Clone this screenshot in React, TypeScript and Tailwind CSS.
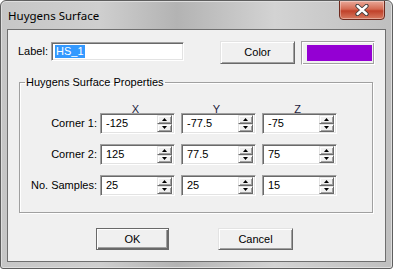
const font = { fontFamily: '"Liberation Sans", Arial, sans-serif' }

const Arrow = ({ down }: { down?: boolean }) => (
  <svg width="5" height="3" viewBox="0 0 5 3" className="block">
    <path d={down ? 'M0 0H5L2.5 3Z' : 'M0 3H5L2.5 0Z'} fill="#000" />
  </svg>
)

const SpinButton = ({ down }: { down?: boolean }) => (
  <div className="flex-1 flex items-center justify-center bg-[#f0f0f0] border border-t-[#e3e3e3] border-l-[#e3e3e3] border-b-[#696969] border-r-[#696969] shadow-[inset_1px_1px_0_#fff,inset_-1px_-1px_0_#a0a0a0]">
    <Arrow down={down} />
  </div>
)

const SpinBox = ({ value }: { value: string }) => (
  <div className="w-[75px] h-[21px] flex bg-white border border-t-[#a0a0a0] border-l-[#a0a0a0] border-b-white border-r-white shadow-[inset_1px_1px_0_#696969,inset_-1px_-1px_0_#e3e3e3]">
    <div className="flex-1 flex items-center pl-[5px] text-[11px] text-black">{value}</div>
    <div className="w-[15px] flex flex-col my-[1px] mr-[2px]">
      <SpinButton />
      <SpinButton down />
    </div>
  </div>
)

const Button = ({ label, width, isDefault }: { label: string; width: string; isDefault?: boolean }) => (
  <div
    className={`${width} h-[22px] flex items-center justify-center text-[11px] text-black bg-[#f0f0f0] border ${
      isDefault
        ? 'border-[#696969] shadow-[inset_1px_1px_0_#fff,inset_-1px_-1px_0_#696969,inset_-2px_-2px_0_#a0a0a0]'
        : 'border-t-[#e3e3e3] border-l-[#e3e3e3] border-b-[#696969] border-r-[#696969] shadow-[inset_1px_1px_0_#fff,inset_-1px_-1px_0_#a0a0a0]'
    }`}
  >
    {label}
  </div>
)

const rows = [
  { label: 'Corner 1:', values: ['-125', '-77.5', '-75'] },
  { label: 'Corner 2:', values: ['125', '77.5', '75'] },
  { label: 'No. Samples:', values: ['25', '25', '15'] },
]

export default function App() {
  return (
    <div className="w-[393px] h-[269px] bg-white" style={font}>
      <div className="w-[393px] h-[269px] flex flex-col rounded-t-[6px] rounded-b-[3px] border border-[#5e5e5e] bg-[linear-gradient(to_right,#c6c6c6,#cfcfcf_25%,#b3b3b3_45%,#d3d3d3_70%,#bfbfbf)] shadow-[inset_0_0_0_1px_#dedede] overflow-hidden">
        {/* Title bar */}
        <div className="h-[28px] flex items-start">
          <div
            className="ml-[7px] mt-[6px] text-[11.5px] text-black"
            style={{ fontFamily: '"Noto Sans", "Open Sans", sans-serif' }}
          >
            Huygens Surface
          </div>
          <div className="ml-auto mr-[7px] -mt-[1px] w-[46px] h-[20px] flex items-center justify-center rounded-b-[4px] border border-[#6e2a1e] bg-[linear-gradient(to_bottom,#e9a999,#d46a52_45%,#c0412a_55%,#d77a60)] shadow-[inset_0_0_0_1px_rgba(255,255,255,0.35)]">
            <svg width="14" height="12" viewBox="0 0 14 12">
              <path d="M2.5 2 L11.5 10 M11.5 2 L2.5 10" stroke="#3a3a3a" strokeWidth="4.2" strokeLinecap="round" />
              <path d="M2.5 2 L11.5 10 M11.5 2 L2.5 10" stroke="#fff" strokeWidth="2.4" strokeLinecap="round" />
            </svg>
          </div>
        </div>

        {/* Client area */}
        <div className="mx-[6px] mb-[6px] flex-1 flex flex-col bg-[#f0f0f0] border border-[#6f6f6f]">
          {/* Label / colour row */}
          <div className="flex items-start mt-[11px]">
            <div className="flex items-center mt-[1px] h-[19px] ml-[10px]">
              <span className="w-[33px] text-[11px] text-black">Label:</span>
              <div className="w-[133px] h-[19px] flex items-center bg-white border border-t-[#a0a0a0] border-l-[#a0a0a0] border-b-white border-r-white shadow-[inset_1px_1px_0_#696969,inset_-1px_-1px_0_#e3e3e3] pl-[3px]">
                <span className="bg-[#3399ff] text-white text-[11px] leading-[13px] px-[1px]">HS_1</span>
              </div>
            </div>
            <div className="ml-[36px]">
              <div className="w-[75px] h-[23px] flex items-center justify-center text-[11px] text-black bg-[#f0f0f0] border border-t-[#e3e3e3] border-l-[#e3e3e3] border-b-[#696969] border-r-[#696969] shadow-[inset_1px_1px_0_#fff,inset_-1px_-1px_0_#a0a0a0]">
                Color
              </div>
            </div>
            <div className="ml-[6px] w-[74px] h-[24px] border border-t-[#a0a0a0] border-l-[#a0a0a0] border-b-white border-r-white shadow-[inset_1px_1px_0_#fff,inset_-1px_-1px_0_#a0a0a0]">
              <div className="ml-[5px] mt-[3px] w-[65px] h-[16px] bg-[#9400d3]" />
            </div>
          </div>

          {/* Group box */}
          <fieldset className="ml-[11px] mt-[11px] w-[354px] h-[137px] border border-[#a0a0a0] shadow-[inset_1px_1px_0_#fff,1px_1px_0_#fff]">
            <legend className="ml-[5px] px-[1px] text-[11px] leading-[13px] text-black">Huygens Surface Properties</legend>
            <div className="flex mt-[14px] h-[13px] text-[11px] leading-[13px] text-[#1c1c3c]">
              <div className="w-[78px]" />
              <div className="w-[75px] text-center">X</div>
              <div className="w-[75px] ml-[6px] text-center">Y</div>
              <div className="w-[75px] ml-[6px] text-center">Z</div>
            </div>
            <div className="flex flex-col gap-[10px] -mt-[3px]">
              {rows.map((r) => (
                <div key={r.label} className="flex items-center">
                  <div className="w-[77px] text-right text-[11px] text-black">{r.label}</div>
                  <div className="ml-[3px] flex gap-[6px]">
                    {r.values.map((v, i) => (
                      <SpinBox key={i} value={v} />
                    ))}
                  </div>
                </div>
              ))}
            </div>
          </fieldset>

          {/* Buttons */}
          <div className="flex mt-[15px] ml-[88px]">
            <Button label="OK" width="w-[73px]" isDefault />
            <div className="ml-[49px]">
              <Button label="Cancel" width="w-[75px]" />
            </div>
          </div>
        </div>
      </div>
    </div>
  )
}
